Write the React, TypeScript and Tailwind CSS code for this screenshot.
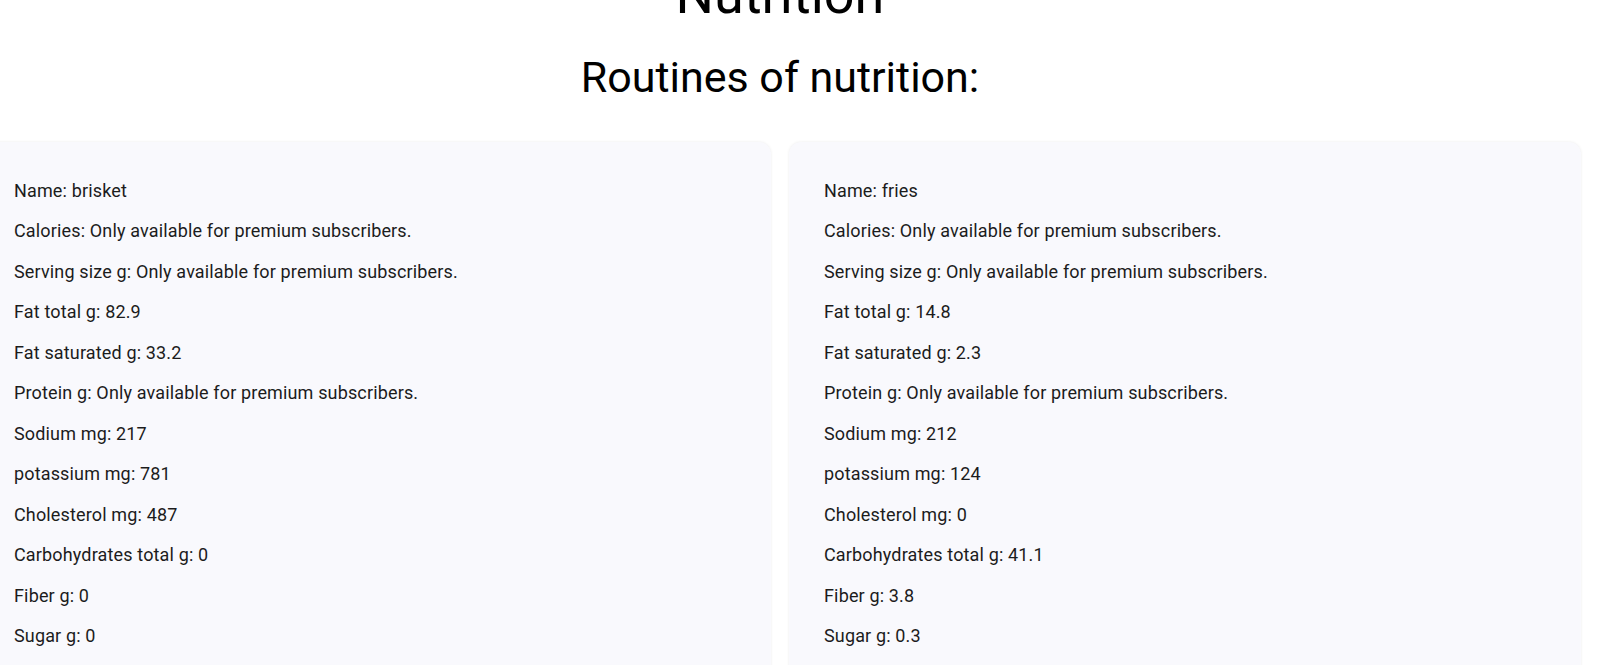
import React from "react";

type Food = {
  name: string;
  fatTotal: string;
  fatSaturated: string;
  sodium: string;
  potassium: string;
  cholesterol: string;
  carbs: string;
  fiber: string;
  sugar: string;
};

const PREMIUM = "Only available for premium subscribers.";

const foods: Food[] = [
  {
    name: "brisket",
    fatTotal: "82.9",
    fatSaturated: "33.2",
    sodium: "217",
    potassium: "781",
    cholesterol: "487",
    carbs: "0",
    fiber: "0",
    sugar: "0",
  },
  {
    name: "fries",
    fatTotal: "14.8",
    fatSaturated: "2.3",
    sodium: "212",
    potassium: "124",
    cholesterol: "0",
    carbs: "41.1",
    fiber: "3.8",
    sugar: "0.3",
  },
];

const FoodCard: React.FC<{ food: Food }> = ({ food }) => {
  const rows = [
    `Name: ${food.name}`,
    `Calories: ${PREMIUM}`,
    `Serving size g: ${PREMIUM}`,
    `Fat total g: ${food.fatTotal}`,
    `Fat saturated g: ${food.fatSaturated}`,
    `Protein g: ${PREMIUM}`,
    `Sodium mg: ${food.sodium}`,
    `potassium mg: ${food.potassium}`,
    `Cholesterol mg: ${food.cholesterol}`,
    `Carbohydrates total g: ${food.carbs}`,
    `Fiber g: ${food.fiber}`,
    `Sugar g: ${food.sugar}`,
  ];
  return (
    <div className="bg-[#f9f9fd] rounded-xl shadow-[0_0_3px_rgba(0,0,0,0.08)] px-[35px] pt-[35px] pb-8">
      {rows.map((row) => (
        <p
          key={row}
          className="text-[18px] leading-[27px] tracking-[0.15px] mb-[13.5px] text-[#1c1c1c]"
        >
          {row}
        </p>
      ))}
    </div>
  );
};

export default function App() {
  return (
    <div className="bg-white min-h-screen overflow-hidden font-['Roboto',sans-serif]">
      <div className="ml-[-21px] w-[1602px]">
        {/* Headings */}
        <h1 className="text-[54px] leading-[54px] text-center text-black mt-[-32.5px]">
          Nutrition
        </h1>
        <h2 className="text-[43px] leading-[43px] text-center text-black mt-[34.3px]">
          Routines of nutrition:
        </h2>

        {/* Cards */}
        <div className="grid grid-cols-2 gap-[18px] mt-[43px]">
          {foods.map((food) => (
            <FoodCard key={food.name} food={food} />
          ))}
        </div>
      </div>
    </div>
  );
}
